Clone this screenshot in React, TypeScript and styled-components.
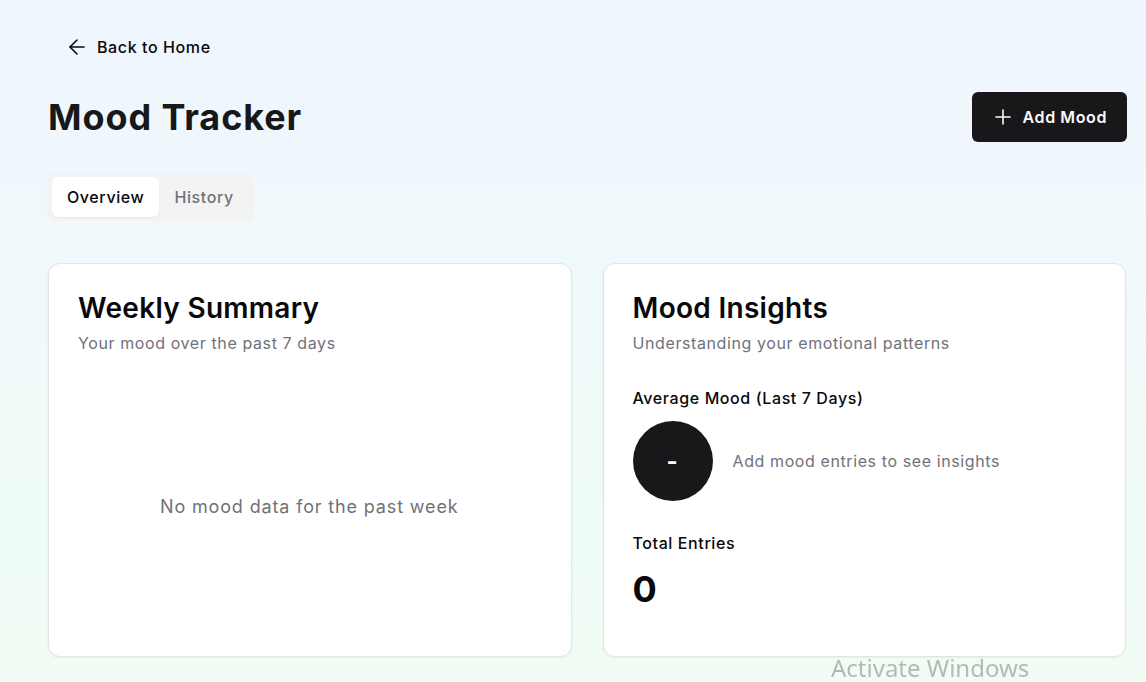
import React from "react";
import styled, { createGlobalStyle } from "styled-components";

const GlobalStyle = createGlobalStyle`
  * { box-sizing: border-box; }
  html, body { margin: 0; padding: 0; }
  body {
    font-family: Inter, "Noto Sans", sans-serif;
    letter-spacing: 0.6px;
    color: #09090b;
    background: linear-gradient(180deg, #eff6ff 0%, #f0fdf4 100%);
    min-height: 100vh;
  }
`;

const Page = styled.div`
  min-height: 682px;
  padding: 28px 19px 24px 48px;
  display: flex;
  flex-direction: column;
`;

const BackLink = styled.a`
  display: inline-flex;
  align-items: center;
  gap: 8px;
  align-self: flex-start;
  height: 38px;
  padding: 0 16px 0 17px;
  font-size: 16px;
  font-weight: 500;
  color: #09090b;
  text-decoration: none;
`;

const HeaderRow = styled.div`
  display: flex;
  align-items: center;
  justify-content: space-between;
  margin-top: 26px;
`;

const Title = styled.h1`
  margin: 0;
  font-size: 36px;
  font-weight: 700;
  letter-spacing: 0.9px;
  color: #18181b;
`;

const PrimaryButton = styled.button`
  display: inline-flex;
  align-items: center;
  gap: 8px;
  height: 50px;
  padding: 0 20px 0 19px;
  border: none;
  border-radius: 6px;
  background: #18181b;
  color: #fafafa;
  font-family: inherit;
  letter-spacing: 0.6px;
  font-size: 16px;
  font-weight: 600;
`;

const TabList = styled.div`
  display: inline-flex;
  align-self: flex-start;
  align-items: center;
  margin-top: 31px;
  margin-left: -1px;
  padding: 4px 5px;
  border-radius: 8px;
  background: #f3f3f4;
  height: 48px;
`;

const Tab = styled.button<{ $active?: boolean }>`
  height: 40px;
  padding: 0 15px;
  border: none;
  border-radius: 6px;
  font-family: inherit;
  letter-spacing: 0.6px;
  font-size: 16px;
  font-weight: 500;
  background: ${(p) => (p.$active ? "#ffffff" : "transparent")};
  color: ${(p) => (p.$active ? "#09090b" : "#71717a")};
  box-shadow: ${(p) => (p.$active ? "0 1px 2px rgba(0,0,0,0.05)" : "none")};
`;

const Grid = styled.div`
  display: grid;
  grid-template-columns: 1fr 1fr;
  gap: 31px;
  margin-top: 42px;
  margin-right: 1px;
`;

const Card = styled.section`
  height: 394px;
  background: #ffffff;
  border: 1px solid #e4e4e7;
  border-radius: 12px;
  box-shadow: 0 1px 3px rgba(0, 0, 0, 0.05);
  padding: 26px 30px 30px 29px;
  display: flex;
  flex-direction: column;
`;

const CardTitle = styled.h2`
  margin: 0;
  font-size: 28px;
  font-weight: 600;
  letter-spacing: 0.3px;
  line-height: 36px;
`;

const CardSubtitle = styled.p`
  margin: 5px 0 0;
  font-size: 16px;
  color: #71717a;
  line-height: 24px;
`;

const EmptyState = styled.div`
  flex: 1;
  display: flex;
  align-items: center;
  justify-content: center;
  font-size: 18px;
  letter-spacing: 0.85px;
  color: #71717a;
  padding-top: 32px;
`;

const Section = styled.div<{ $gap: number; $top: number }>`
  display: flex;
  flex-direction: column;
  gap: ${(p) => p.$gap}px;
  margin-top: ${(p) => p.$top}px;
`;

const Label = styled.div`
  font-size: 16px;
  font-weight: 500;
  line-height: 24px;
`;

const MoodRow = styled.div`
  display: flex;
  align-items: center;
  gap: 20px;
`;

const MoodCircle = styled.div`
  width: 80px;
  height: 80px;
  border-radius: 50%;
  background: #18181b;
  color: #fafafa;
  display: flex;
  align-items: center;
  justify-content: center;
  font-size: 24px;
  font-weight: 700;
`;

const Hint = styled.span`
  font-size: 16px;
  color: #71717a;
`;

const BigNumber = styled.div`
  font-size: 36px;
  font-weight: 700;
  line-height: 40px;
`;

const Watermark = styled.div`
  position: fixed;
  left: 831px;
  top: 651px;
  font-family: "Segoe UI", "Noto Sans", sans-serif;
  letter-spacing: 0;
  font-size: 24px;
  color: rgba(140, 140, 140, 0.6);
  pointer-events: none;
`;

const ArrowLeft = () => (
  <svg width="24" height="24" viewBox="0 0 24 24" fill="none" stroke="currentColor" strokeWidth="1.6" strokeLinecap="round" strokeLinejoin="round">
    <path d="m12 19-7-7 7-7" />
    <path d="M19 12H5" />
  </svg>
);

const Plus = () => (
  <svg width="24" height="24" viewBox="0 0 24 24" fill="none" stroke="currentColor" strokeWidth="1.6" strokeLinecap="round" strokeLinejoin="round">
    <path d="M5 12h14" />
    <path d="M12 5v14" />
  </svg>
);

export default function App() {
  return (
    <>
      <GlobalStyle />
      <Page>
        <BackLink href="#">
          <ArrowLeft />
          Back to Home
        </BackLink>
        <HeaderRow>
          <Title>Mood Tracker</Title>
          <PrimaryButton>
            <Plus />
            Add Mood
          </PrimaryButton>
        </HeaderRow>
        <TabList>
          <Tab $active>Overview</Tab>
          <Tab>History</Tab>
        </TabList>
        <Grid>
          <Card>
            <CardTitle>Weekly Summary</CardTitle>
            <CardSubtitle>Your mood over the past 7 days</CardSubtitle>
            <EmptyState>No mood data for the past week</EmptyState>
          </Card>
          <Card>
            <CardTitle>Mood Insights</CardTitle>
            <CardSubtitle>Understanding your emotional patterns</CardSubtitle>
            <Section $gap={11} $top={31}>
              <Label>Average Mood (Last 7 Days)</Label>
              <MoodRow>
                <MoodCircle>-</MoodCircle>
                <Hint>Add mood entries to see insights</Hint>
              </MoodRow>
            </Section>
            <Section $gap={14} $top={30}>
              <Label>Total Entries</Label>
              <BigNumber>0</BigNumber>
            </Section>
          </Card>
        </Grid>
      </Page>
      <Watermark>Activate Windows</Watermark>
    </>
  );
}
